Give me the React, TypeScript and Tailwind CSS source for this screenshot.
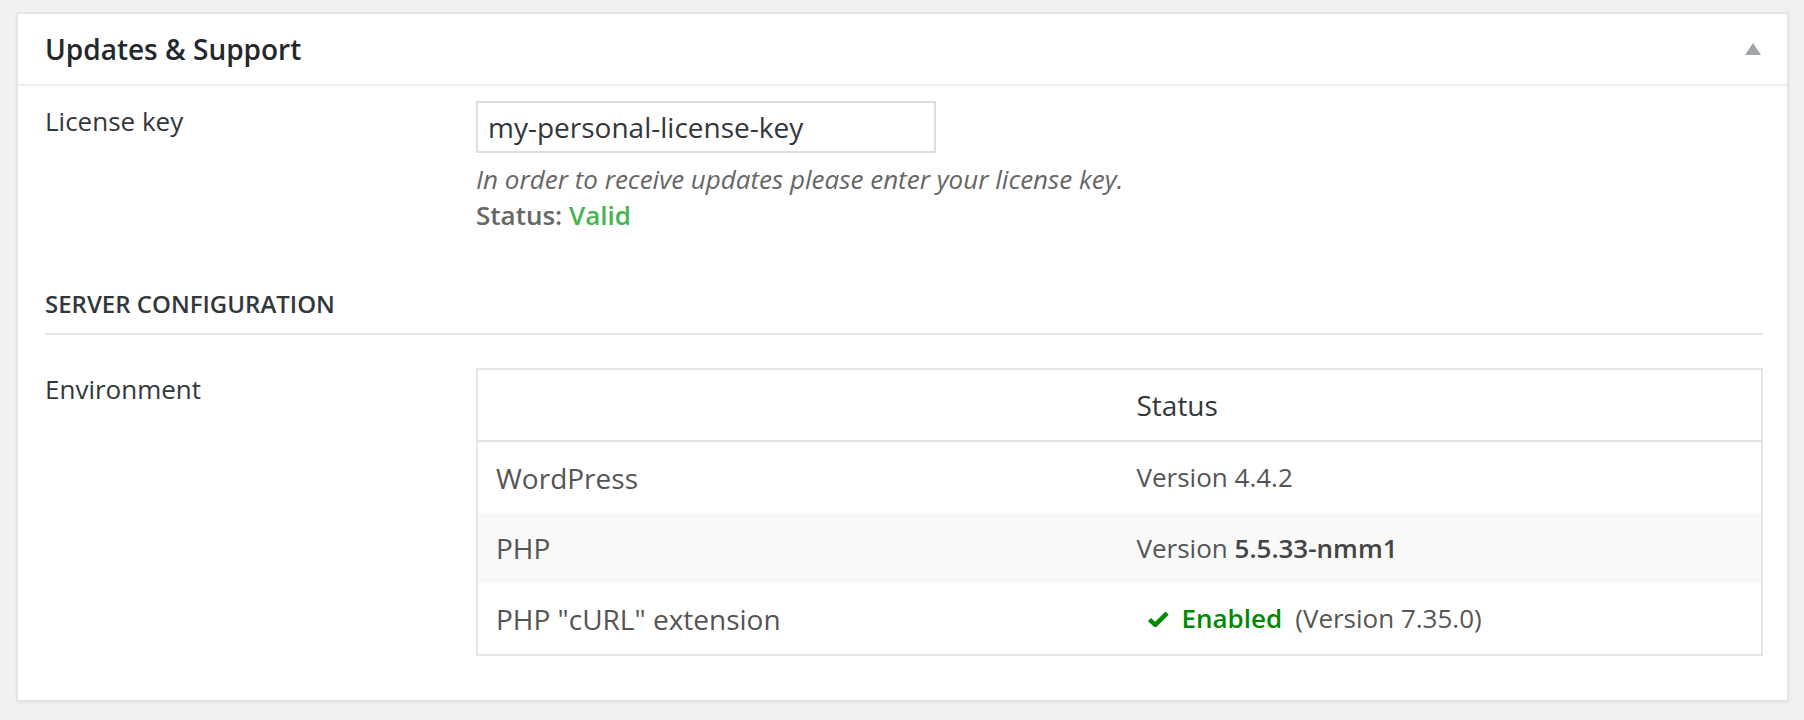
import { ReactNode } from 'react';

const rows: { name: string; status: ReactNode; striped?: boolean; height: string }[] = [
  { name: 'WordPress', status: 'Version 4.4.2', height: 'h-[71px]' },
  {
    name: 'PHP',
    striped: true,
    height: 'h-[70px]',
    status: (
      <>
        Version <span className="font-semibold text-[#444]">5.5.33-nmm1</span>
      </>
    ),
  },
  {
    name: 'PHP "cURL" extension',
    height: 'h-[71px]',
    status: (
      <span className="flex items-center">
        <svg viewBox="0 0 20 15" className="ml-[10px] h-[16px] w-[22px]">
          <path d="M2 8 L7.5 13 L18.5 2" fill="none" stroke="#008a00" strokeWidth="4.2" />
        </svg>
        <span className="ml-[13px] font-semibold text-[#008a00]">Enabled</span>
        <span className="ml-[13px]">(Version 7.35.0)</span>
      </span>
    ),
  },
];

export default function App() {
  return (
    <div className="min-h-screen bg-[#f1f1f1] pl-4 pr-[15px] pt-3 font-['Open_Sans',sans-serif]">
      <div className="border-2 border-[#e5e5e5] bg-white shadow-[0_1px_2px_rgba(0,0,0,0.05)]">
        {/* Header */}
        <div className="flex h-[72px] items-center justify-between border-b-2 border-[#eeeeee] pl-[27px] pr-[26px]">
          <h2 className="text-[28px] font-semibold text-[#23282d]">Updates &amp; Support</h2>
          <svg viewBox="0 0 16 12" className="h-[12px] w-[16px]">
            <polygon points="8,0 16,12 0,12" fill="#a0a5aa" />
          </svg>
        </div>

        <div className="pb-[44px] pl-[27px] pr-[24px] pt-[15px]">
          {/* License key */}
          <div className="flex">
            <div className="w-[431px] shrink-0 pt-[2px] text-[26px] leading-[36px] text-[#32373c]">License key</div>
            <div>
              <input
                type="text"
                defaultValue="my-personal-license-key"
                className="h-[52px] w-[460px] border-2 border-[#dddddd] px-[10px] text-[28px] text-[#32373c] outline-none"
              />
              <p className="mt-[8px] text-[26px] italic leading-[36px] text-[#666]">
                In order to receive updates please enter your license key.
              </p>
              <p className="text-[26px] leading-[37px] text-[#666]">
                <span className="font-semibold">Status:</span>{' '}
                <span className="font-semibold text-[#46b450]">Valid</span>
              </p>
            </div>
          </div>

          {/* Server configuration */}
          <h3 className="mt-[52px] border-b-2 border-[#e5e5e5] pb-[11px] text-[24px] font-semibold uppercase leading-[36px] text-[#32373c]">
            Server Configuration
          </h3>

          <div className="mt-[33px] flex">
            <div className="w-[431px] shrink-0 pt-[3px] text-[26px] leading-[36px] text-[#32373c]">Environment</div>
            <div className="flex-1 border-2 border-[#e5e5e5] text-[#555]">
              <div className="grid h-[72px] grid-cols-2 items-center border-b-2 border-[#e1e1e1] text-[28px] text-[#32373c]">
                <div />
                <div className="pl-[17px]">Status</div>
              </div>
              {rows.map(row => (
                <div
                  key={row.name}
                  className={`grid ${row.height} grid-cols-2 items-center ${row.striped ? 'bg-[#f9f9f9]' : ''}`}
                >
                  <div className="pl-[18px] text-[28px]">{row.name}</div>
                  <div className="pl-[17px] text-[26px]">{row.status}</div>
                </div>
              ))}
            </div>
          </div>
        </div>
      </div>
    </div>
  );
}
